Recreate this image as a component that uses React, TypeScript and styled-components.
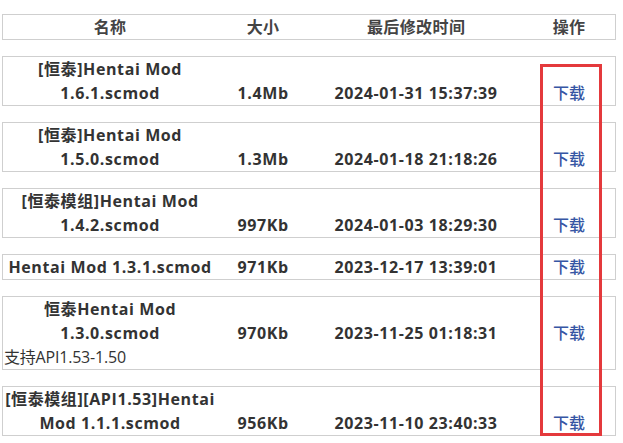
import React from "react";
import styled, { createGlobalStyle } from "styled-components";

const Global = createGlobalStyle`
  html, body { margin: 0; padding: 0; background: #fff; }
  body { font-family: "Open Sans", "Noto Sans CJK SC", sans-serif; color: #333; }
`;

const Page = styled.div`
  position: relative;
  padding: 14px 0 0 2px;
  width: 614px;
`;

const Box = styled.div`
  border: 1px solid #cfcfcf;
  margin-bottom: 16px;
`;

const Row = styled.div`
  display: grid;
  grid-template-columns: 35% 15% 35% 15%;
  align-items: end;
  font-size: 16px;
  line-height: 24px;
  font-weight: 700;
  letter-spacing: 0.6px;
  text-align: center;
  color: #333;
`;

const HeadRow = styled(Row)`
  color: #444;
  align-items: center;
  letter-spacing: 0.4px;
`;

const Cell = styled.div`
  padding: 0 2px;
`;

const Link = styled.a`
  color: #3656a4;
  font-weight: 500;
  text-decoration: none;
  letter-spacing: 0;
`;

const Note = styled.div`
  font-size: 16px;
  line-height: 24px;
  font-weight: 400;
  color: #333;
  padding-left: 1px;
  letter-spacing: -0.2px;
`;

const Highlight = styled.div`
  position: absolute;
  left: 540px;
  top: 64px;
  width: 56px;
  height: 366px;
  border: 3px solid #e4393c;
  pointer-events: none;
`;

type Item = { name: string; size: string; time: string; note?: string };

const items: Item[] = [
  { name: "[恒泰]Hentai Mod 1.6.1.scmod", size: "1.4Mb", time: "2024-01-31 15:37:39" },
  { name: "[恒泰]Hentai Mod 1.5.0.scmod", size: "1.3Mb", time: "2024-01-18 21:18:26" },
  { name: "[恒泰模组]Hentai Mod 1.4.2.scmod", size: "997Kb", time: "2024-01-03 18:29:30" },
  { name: "Hentai Mod 1.3.1.scmod", size: "971Kb", time: "2023-12-17 13:39:01" },
  { name: "恒泰Hentai Mod 1.3.0.scmod", size: "970Kb", time: "2023-11-25 01:18:31", note: "支持API1.53-1.50" },
  { name: "[恒泰模组][API1.53]Hentai Mod 1.1.1.scmod", size: "956Kb", time: "2023-11-10 23:40:33" },
];

export default function App() {
  return (
    <>
      <Global />
      <Page>
        <Box>
          <HeadRow>
            <Cell>名称</Cell>
            <Cell>大小</Cell>
            <Cell>最后修改时间</Cell>
            <Cell>操作</Cell>
          </HeadRow>
        </Box>
        {items.map((it) => (
          <Box key={it.time}>
            <Row>
              <Cell>{it.name}</Cell>
              <Cell>{it.size}</Cell>
              <Cell>{it.time}</Cell>
              <Cell>
                <Link href="#">下载</Link>
              </Cell>
            </Row>
            {it.note && <Note>{it.note}</Note>}
          </Box>
        ))}
        <Highlight />
      </Page>
    </>
  );
}
